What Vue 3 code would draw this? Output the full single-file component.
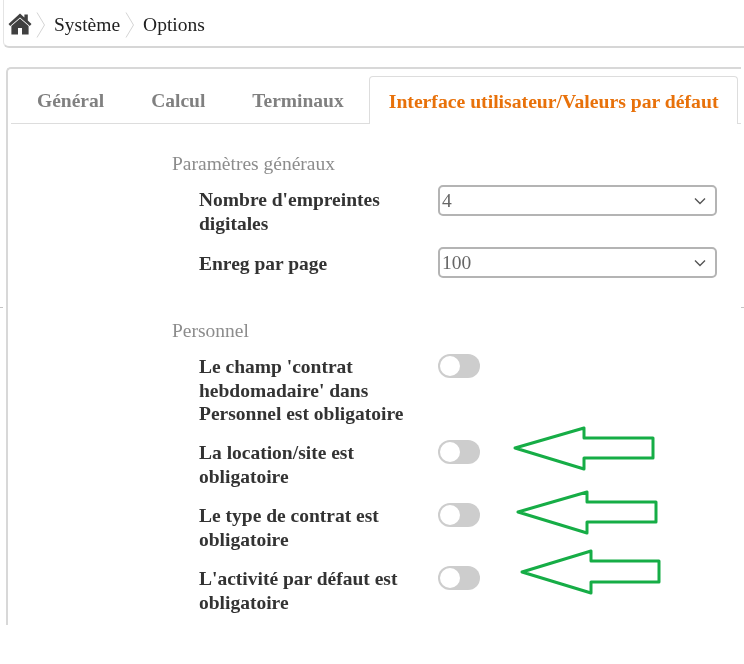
<script setup>
const tabs = ['Général', 'Calcul', 'Terminaux']

const personnel = [
  "Le champ 'contrat hebdomadaire' dans Personnel est obligatoire",
  'La location/site est obligatoire',
  'Le type de contrat est obligatoire',
  "L'activité par défaut est obligatoire",
]

const arrows = [
  '515,448 584,428 584,438 653,438 653,458 584,458 584,469',
  '518,512 587,492 587,502 656,502 656,522 587,522 587,533',
  '522,572 591,551 591,561 659,561 659,582 591,582 591,593',
]
</script>

<template>
  <div class="page">
    <nav class="crumbs">
      <svg class="home" viewBox="0 0 24 22" width="24" height="22">
        <path d="M12 0.5 L0.5 11 L2.2 12.9 L12 4.4 L21.8 12.9 L23.5 11 L19.8 7.6 V1.5 H16.4 V4.5 Z" />
        <path d="M12 5.6 L3.4 13 V21.5 H10 V15 H14 V21.5 H20.6 V13 Z" />
      </svg>
      <svg class="sep" viewBox="0 0 10 26" width="10" height="26">
        <path d="M1 0.5 L8.5 13 L1 25.5" />
      </svg>
      <span>Système</span>
      <svg class="sep" viewBox="0 0 10 26" width="10" height="26">
        <path d="M1 0.5 L8.5 13 L1 25.5" />
      </svg>
      <span>Options</span>
    </nav>

    <section class="panel">
      <div class="tabs">
        <a v-for="t in tabs" :key="t" class="tab">{{ t }}</a>
        <a class="tab active">Interface utilisateur/Valeurs par défaut</a>
      </div>

      <div class="body">
        <h3 class="group-title">Paramètres généraux</h3>
        <div class="row select-row tall">
          <label>Nombre d'empreintes digitales</label>
          <div class="select">
            <span>4</span>
            <svg viewBox="0 0 12 8" width="12" height="8"><path d="M1 1.5 L6 6.5 L11 1.5" /></svg>
          </div>
        </div>
        <div class="row select-row">
          <label>Enreg par page</label>
          <div class="select">
            <span>100</span>
            <svg viewBox="0 0 12 8" width="12" height="8"><path d="M1 1.5 L6 6.5 L11 1.5" /></svg>
          </div>
        </div>

        <h3 class="group-title second">Personnel</h3>
        <div class="toggles">
          <div v-for="label in personnel" :key="label" class="row">
            <label>{{ label }}</label>
            <span class="toggle"><i></i></span>
          </div>
        </div>
      </div>
    </section>

    <i class="tick left"></i>
    <i class="tick right"></i>

    <svg class="arrows" viewBox="0 0 744 664" width="744" height="664">
      <polygon v-for="(p, i) in arrows" :key="i" :points="p" />
    </svg>
  </div>
</template>

<style>
body {
  margin: 0;
  background: #fff;
}
</style>

<style scoped>
.page {
  position: relative;
  width: 744px;
  height: 664px;
  overflow: hidden;
  background: #fff;
  font-family: "Liberation Serif", serif;
  color: #333;
  filter: blur(0.35px);
}

.crumbs {
  display: flex;
  align-items: center;
  box-sizing: border-box;
  height: 48px;
  margin-left: 3px;
  padding: 4px 0 0 4px;
  border-bottom: 2px solid #d6d6d6;
  border-left: 1px solid #e4e4e4;
  border-bottom-left-radius: 6px;
  font-size: 19.5px;
  color: #222;
}

.home {
  fill: #404040;
  margin: -2px 4px 0 0;
}

.sep {
  margin-right: 8px;
  fill: none;
  stroke: #d4d4d4;
  stroke-width: 1;
}

.crumbs span {
  margin-right: 5px;
}

.panel {
  box-sizing: border-box;
  width: 735px;
  height: 558px;
  margin: 19px 0 0 6px;
  border: 2px solid #d8d8d8;
  border-bottom: 0;
  border-right: 0;
  border-top-left-radius: 5px;
}

.tabs {
  display: flex;
  height: 47px;
  margin: 7px 0 0 3px;
  border-bottom: 1px solid #ddd;
  font-weight: 700;
  font-size: 19.5px;
}

.tab {
  display: flex;
  align-items: center;
  padding: 2px 23.5px 0;
  color: #808080;
}

.tab:first-child {
  padding-left: 26px;
}

.tab:nth-child(3) {
  padding-right: 25px;
}

.tab.active {
  box-sizing: border-box;
  width: 369px;
  height: 48px;
  padding: 2px 0 0 19px;
  white-space: nowrap;
  font-size: 19.7px;
  color: #e8710a;
  background: #fff;
  border: 1px solid #ddd;
  border-bottom: 0;
  border-radius: 4px 4px 0 0;
}

.body {
  padding: 29px 0 0 164px;
}

.group-title {
  margin: 0;
  font-size: 19.5px;
  font-weight: 400;
  line-height: 22px;
  color: #8c8c8c;
}

.group-title.second {
  margin-top: 42px;
}

.row {
  display: grid;
  grid-template-columns: 239px 279px;
  padding-left: 27px;
}

label {
  font-weight: 700;
  font-size: 19.5px;
  line-height: 23.5px;
  color: #333;
}

.select-row {
  align-items: start;
  margin-top: 16px;
}

.select-row.tall {
  margin-top: 13px;
  height: 48px;
}

.select-row label {
  padding-right: 20px;
}

.select {
  display: flex;
  align-items: center;
  justify-content: space-between;
  box-sizing: border-box;
  height: 31px;
  margin-top: -5px;
  padding: 1px 9px 0 2px;
  border: 2px solid #b4b4b4;
  border-radius: 5px;
  font-size: 19.5px;
  color: #666;
}

.tall .select {
  margin-top: -3px;
}

.select svg {
  fill: none;
  stroke: #555;
  stroke-width: 1.4;
}

.toggles {
  display: flex;
  flex-direction: column;
  gap: 15.9px;
  margin-top: 13px;
}

.toggles .row {
  grid-template-columns: 239px 42px;
}

.toggles label {
  width: 222px;
}

.toggle {
  display: block;
  box-sizing: border-box;
  width: 42px;
  height: 24px;
  margin-top: -1px;
  padding: 2px;
  background: #cdcdcd;
  border-radius: 12px;
}

.toggle i {
  display: block;
  width: 20px;
  height: 20px;
  background: #fff;
  border-radius: 50%;
}

.tick {
  position: absolute;
  top: 307px;
  width: 3px;
  height: 1px;
  background: #c4c4c4;
}

.tick.left {
  left: 0;
}

.tick.right {
  right: 0;
}

.arrows {
  position: absolute;
  top: 0;
  left: 0;
  pointer-events: none;
}

.arrows polygon {
  fill: none;
  stroke: #16ad46;
  stroke-width: 3;
  stroke-linejoin: round;
}
</style>
